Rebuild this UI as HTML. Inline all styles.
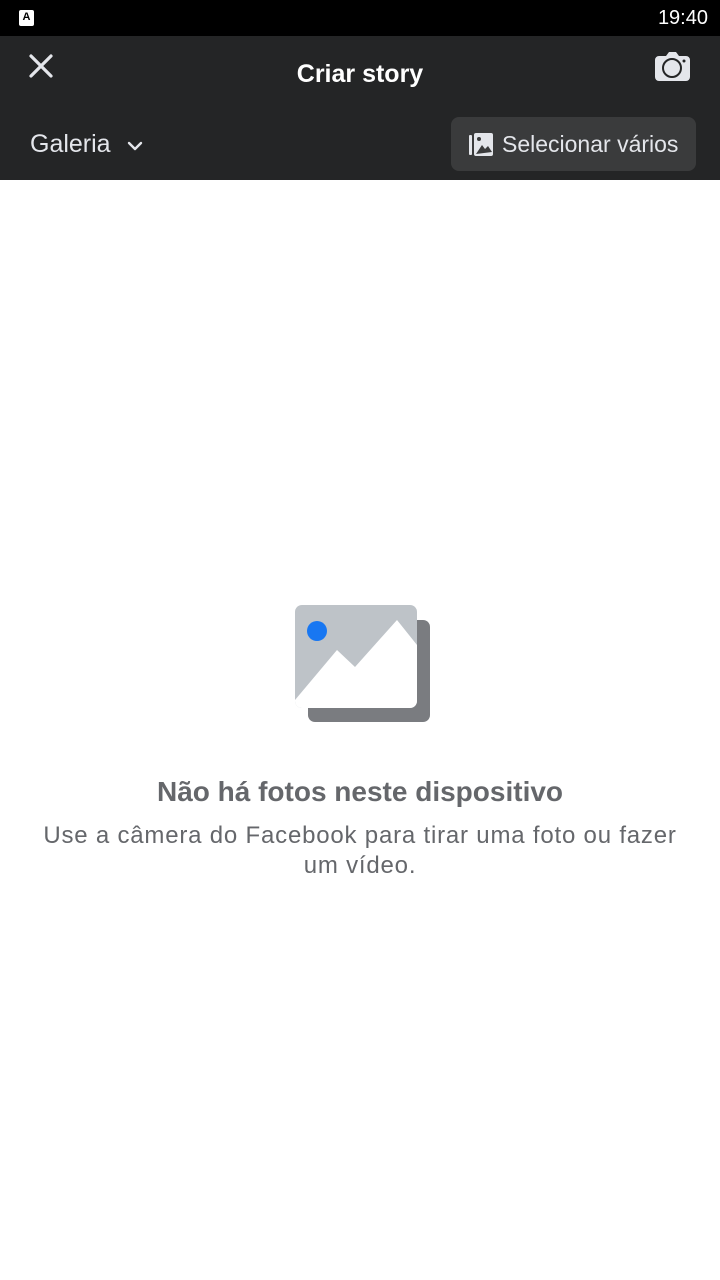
<html><head><style>
body{margin:0;width:720px;height:1280px;background:#fff;font-family:"Liberation Sans",sans-serif;position:relative;overflow:hidden}
.a{position:absolute}
</style></head><body>
<div class="a" style="left:0;top:0;width:720px;height:36px;background:#000"></div>
<div class="a" style="left:19px;top:10px;width:15px;height:16px;background:#fff;border-radius:2px;font-size:11px;font-weight:bold;text-align:center;line-height:14px">A</div>
<div class="a" style="right:12px;top:7px;color:#fff;font-size:20px">19:40</div>
<div class="a" style="left:0;top:36px;width:720px;height:144px;background:#242526"></div>
<svg class="a" style="left:28px;top:53px" width="26" height="26" viewBox="0 0 26 26"><path d="M3 3L23 23M23 3L3 23" stroke="#e4e6eb" stroke-width="3.2" stroke-linecap="round"/></svg>
<div class="a" style="left:0;width:720px;top:60px;text-align:center;color:#fff;font-size:25px;font-weight:bold">Criar story</div>
<svg class="a" style="left:654px;top:48px" width="37" height="35" viewBox="0 0 37 35"><path d="M5 8h7l3-4h7l3 4h7a4 4 0 0 1 4 4v17a4 4 0 0 1-4 4H5a4 4 0 0 1-4-4V12a4 4 0 0 1 4-4z" fill="#e4e6eb"/><circle cx="18" cy="20" r="9" fill="none" stroke="#242526" stroke-width="2"/><circle cx="30" cy="13" r="1.5" fill="#242526"/></svg>
<div class="a" style="left:30px;top:130px;color:#e4e6eb;font-size:25px">Galeria</div>
<svg class="a" style="left:126px;top:139px" width="18" height="14" viewBox="0 0 18 14"><path d="M3 4l6 6 6-6" fill="none" stroke="#e4e6eb" stroke-width="2.4" stroke-linecap="round" stroke-linejoin="round"/></svg>
<div class="a" style="left:451px;top:117px;width:245px;height:54px;background:#3a3b3c;border-radius:8px"></div>
<svg class="a" style="left:469px;top:132px" width="25" height="25" viewBox="0 0 25 25"><rect x="0" y="3" width="3" height="20" rx="1" fill="#e4e6eb"/><rect x="5" y="1" width="19" height="23" rx="2" fill="#e4e6eb"/><circle cx="10" cy="7" r="2" fill="#3a3b3c"/><path d="M7 22l6-9 3 4 3-3 4 6z" fill="#3a3b3c"/></svg>
<div class="a" style="left:502px;top:131px;color:#e4e6eb;font-size:23px">Selecionar vários</div>
<svg class="a" style="left:290px;top:600px" width="145" height="128" viewBox="290 600 145 128"><rect x="308" y="620" width="122" height="102" rx="7" fill="#7a7c80"/><rect x="295" y="605" width="122" height="103" rx="7" fill="#bec3c8"/><path d="M295 700L337 650L355 667L397 620L417 645V701a7 7 0 0 1-7 7H302a7 7 0 0 1-7-7z" fill="#fff"/><circle cx="317" cy="631" r="10" fill="#1877f2"/></svg>
<div class="a" style="left:0;width:720px;top:776px;text-align:center;color:#65676b;font-size:28px;font-weight:bold">Não há fotos neste dispositivo</div>
<div class="a" style="left:30px;width:660px;top:821px;text-align:center;color:#65676b;font-size:24px;line-height:30px;letter-spacing:0.8px">Use a câmera do Facebook para tirar uma foto ou fazer um vídeo.</div>
</body></html>
